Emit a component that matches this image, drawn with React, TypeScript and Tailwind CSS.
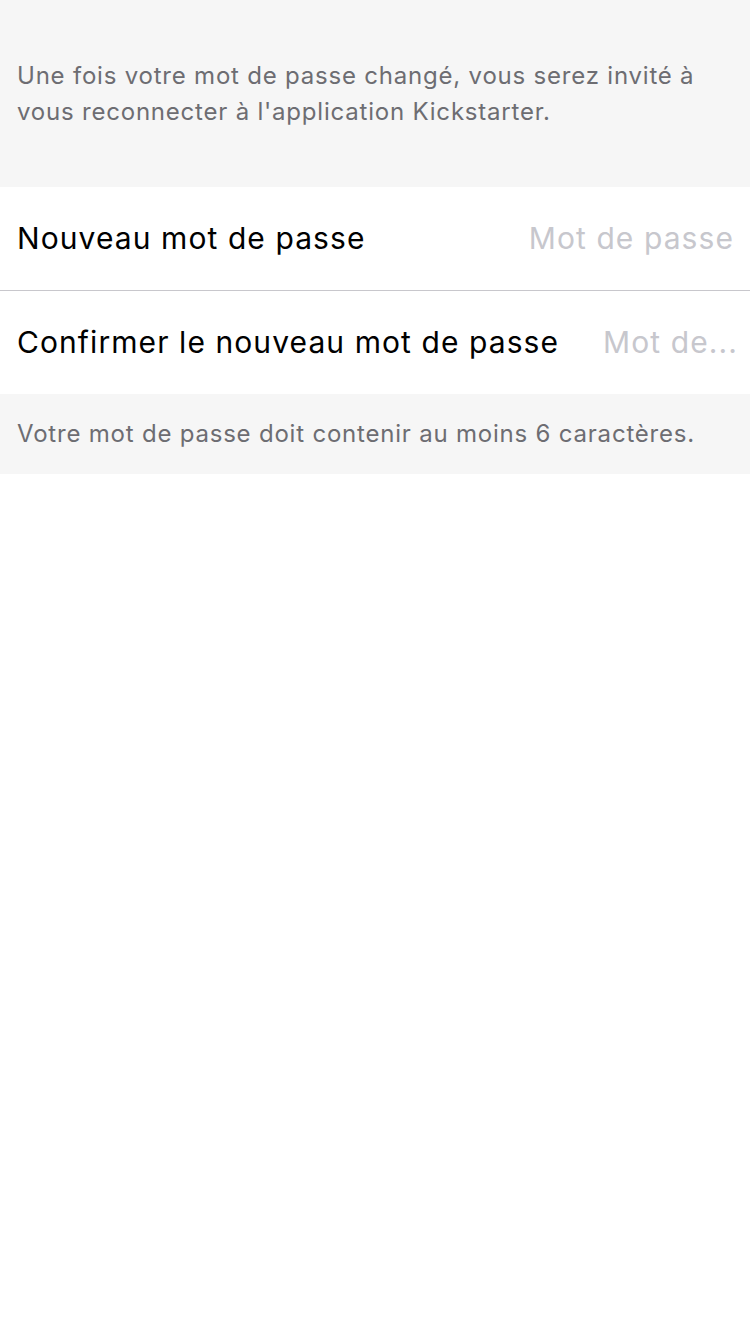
import React from "react";

export default function App() {
  const font = { fontFamily: "Inter, 'Noto Sans', sans-serif" };
  return (
    <div className="w-[750px] h-[1334px] bg-white" style={font}>
      <div className="bg-[#f6f6f6] h-[187px] px-[17px] pt-[58px]">
        <p className="text-[24px] leading-[36px] tracking-[0.033em] text-[#6d6d72]">
          Une fois votre mot de passe changé, vous serez invité à<br />vous reconnecter à l'application Kickstarter.
        </p>
      </div>
      <div className="h-[103px] flex items-center pl-[17px] pr-[16px] gap-[44px]">
        <span className="text-[30px] tracking-[0.036em] text-black whitespace-nowrap">Nouveau mot de passe</span>
        <span className="flex-1 min-w-0 text-right text-[30px] tracking-[0.036em] text-[#c7c7cd] whitespace-nowrap">Mot de passe</span>
      </div>
      <div className="h-px bg-[#c8c7cc]" />
      <div className="h-[103px] flex items-center pl-[17px] pr-[16px] gap-[44px]">
        <span className="text-[30px] tracking-[0.036em] text-black whitespace-nowrap">Confirmer le nouveau mot de passe</span>
        <span className="flex-1 min-w-0 text-right text-[30px] tracking-[0.036em] text-[#c7c7cd] whitespace-nowrap">Mot de...</span>
      </div>
      <div className="bg-[#f6f6f6] h-[80px] px-[17px] flex items-center">
        <p className="text-[24px] tracking-[0.033em] text-[#6d6d72]">Votre mot de passe doit contenir au moins 6 caractères.</p>
      </div>
    </div>
  );
}
